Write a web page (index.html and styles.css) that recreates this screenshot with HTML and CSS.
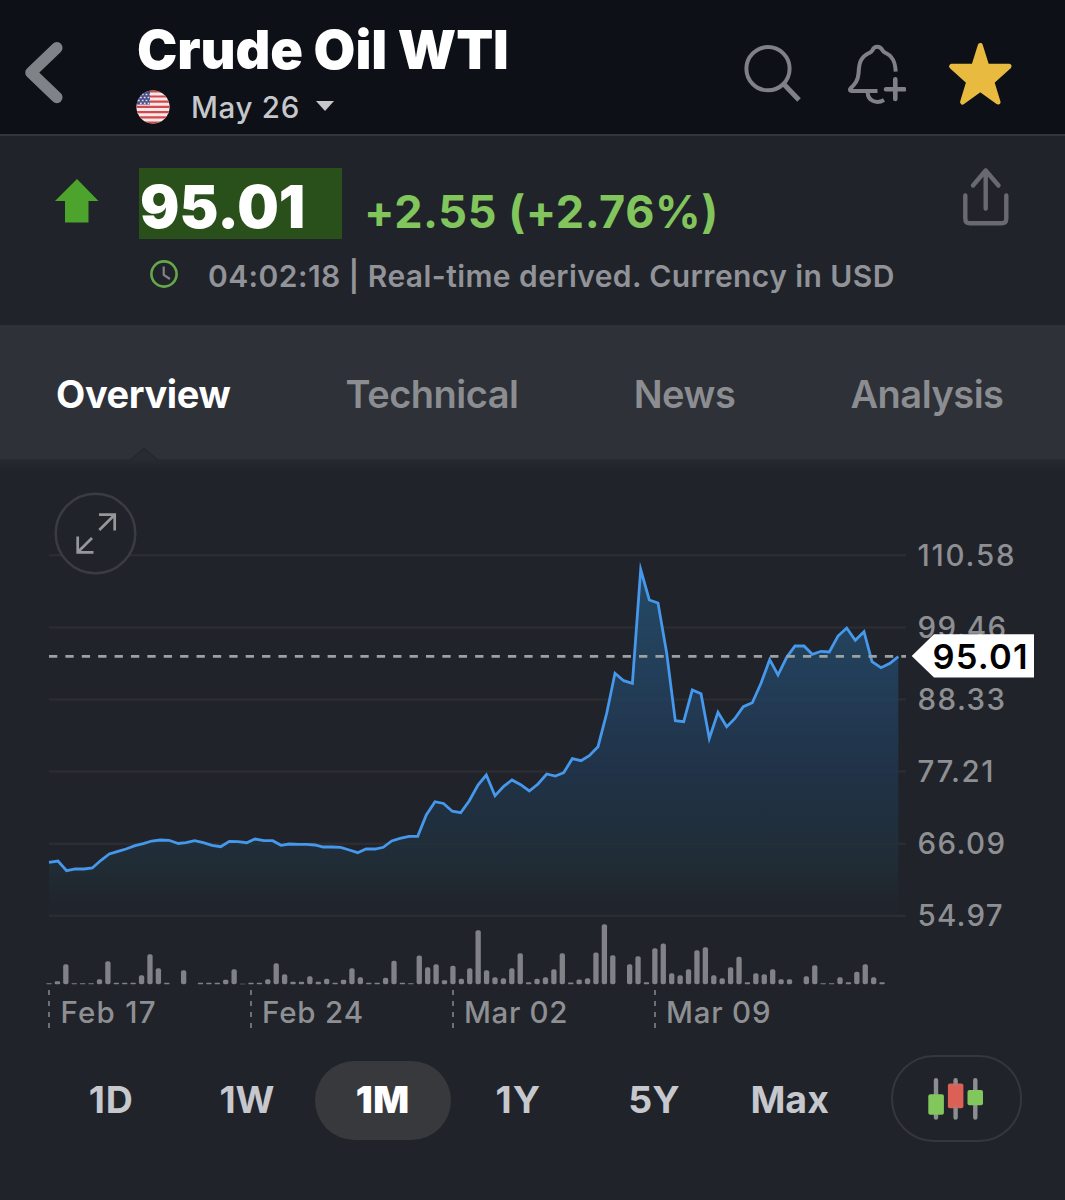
FILE: index.html
```html
<!DOCTYPE html>
<html lang="en">
<head>
<meta charset="utf-8">
<title>Crude Oil WTI</title>
<link rel="stylesheet" href="styles.css">
</head>
<body>
<header class="topbar">
  <svg class="back" width="44" height="70" viewBox="22 38 44 70"><path d="M56.8 47.8 31 72.6 56.8 97.4"/></svg>
  <div class="heading">
    <h1 class="title">Crude Oil WTI</h1>
    <div class="contract">
      <svg class="flag" width="34" height="34" viewBox="0 0 34 34">
        <clipPath id="disc"><circle cx="17" cy="17" r="16.6"/></clipPath>
        <g clip-path="url(#disc)">
          <rect width="34" height="34" fill="#f6e9e8"/>
          <path d="M0 1.3h34M0 6.5h34M0 11.7h34M0 16.9h34M0 22.1h34M0 27.3h34M0 32.5h34" stroke="#d1494c" stroke-width="2.2"/>
          <rect width="14" height="14.6" fill="#4a4d86"/>
          <path d="M2 4.5h12M4 7.5h10M2 10.5h12M4 13.3h10" stroke="#dcdcea" stroke-width="1.7" stroke-dasharray="1.8 2"/>
        </g>
      </svg>
      <span class="month">May 26</span>
      <svg class="caret" width="18" height="10" viewBox="0 0 18 10"><path d="M0 0h18L9 10z"/></svg>
    </div>
  </div>
  <div class="actions">
    <svg width="60" height="64" viewBox="742 41 60 64"><g fill="none" stroke="#7f8187" stroke-width="4"><circle cx="768" cy="68.7" r="21.6"/><path stroke-width="5" d="M783.2 83.5 799 100"/></g></svg>
    <svg width="64" height="64" viewBox="842 41 64 64"><g fill="none" stroke="#7f8187" stroke-width="4" stroke-linejoin="round"><path d="M877.5 91H851.5Q849 90.6 850.5 88.5C855 84 858 81 858.6 73C859 63 860.5 57 869.5 52.8C871.5 52 871.6 51.8 872.3 50.5Q873.8 46.8 877.3 46.8T882.6 50.5C883.3 51.8 883.4 52 885.4 52.8C892.5 56 895.3 61.500 895.7 71.700"/><path d="M867.6 91.500C867.5 101.500 877 104 884 100"/><path stroke-width="4.600" stroke-linecap="round" d="M886 89.200h18.300M895.300 79.300v19.700"/></g></svg>
    <svg width="66" height="66" viewBox="946 41 66 66"><path d="M980.3 45.500 986.800 66.300H1009L991.800 81.800 998 102 980.300 89.300 962.600 102 968.800 81.800 951.600 66.300H973.800Z" fill="#e8bb40" stroke="#e8bb40" stroke-width="5" stroke-linejoin="round"/></svg>
  </div>
</header>

<section class="quote">
  <svg class="up" width="44" height="44" viewBox="0 0 44 44"><path d="M22 0 43.500 22H33.500V43.500H10V22H0z"/></svg>
  <div class="figures">
    <div class="price-row">
      <span class="price">95.01</span>
      <span class="change">+2.55 (+2.76%)</span>
    </div>
    <div class="status">
      <svg class="clock" width="28" height="28" viewBox="0 0 28 28"><g fill="none" stroke-width="2.600"><circle cx="14" cy="14" r="12.600" stroke="#65a849"/><path d="M13.700 6.500V14.800L20 19" stroke="#85818a" stroke-width="2.200"/></g></svg>
      <span class="note">04:02:18 | Real-time derived. Currency in USD</span>
    </div>
  </div>
  <svg class="share" width="50" height="60" viewBox="961 167 50 60"><path d="M985.700 170.500V208.500M973 185.500 985.700 170.500 998.500 185.500M965.300 195.500V218.500Q965.300 223.300 970 223.300H1001.500Q1006.300 223.300 1006.300 218.500V195.500"/></svg>
</section>

<nav class="tabs">
  <a class="tab active">Overview</a>
  <a class="tab">Technical</a>
  <a class="tab">News</a>
  <a class="tab">Analysis</a>
</nav>

<main class="chart">
  <svg class="plot" width="1065" height="590" viewBox="0 446 1065 590">
    <defs>
      <linearGradient id="area" gradientUnits="userSpaceOnUse" x1="0" y1="565" x2="0" y2="916">
        <stop offset="0" stop-color="#25506f" stop-opacity=".85"/>
        <stop offset=".33" stop-color="#234361" stop-opacity=".82"/>
        <stop offset=".58" stop-color="#20354d" stop-opacity=".85"/>
        <stop offset=".85" stop-color="#20303a" stop-opacity=".75"/>
        <stop offset="1" stop-color="#21282e" stop-opacity=".2"/>
      </linearGradient>
      <linearGradient id="shade" x1="0" y1="0" x2="0" y2="1">
        <stop offset="0" stop-color="#272a31"/>
        <stop offset="1" stop-color="#20232a"/>
      </linearGradient>
    </defs>
    <rect y="459" width="1065" height="12" fill="url(#shade)"/>
    <path d="M131 460 144 448 157 460z" fill="#282b32"/>
    <path d="M131 459.500 144 448 157 459.500" fill="none" stroke="#24272d" stroke-width="1.200"/>
    <path class="grid" d="M49 555.300H906M49 627.500H906M49 699.500H906M49 771.600H906M49 843.800H906M49 915.800H906"/>
    <path id="fill" fill="url(#area)"/>
    <path id="line" class="line"/>
    <path class="last" d="M49 656.300H906"/>
    <g id="volume" class="volume"></g>
    <path class="ticks" d="M49 990V1029M251 990V1029M453 990V1029M655 990V1029"/>
    <g class="dates">
      <text x="60.500" y="1023.300" textLength="95">Feb 17</text>
      <text x="262" y="1023.300" textLength="101">Feb 24</text>
      <text x="464" y="1023.300" textLength="103.500">Mar 02</text>
      <text x="666" y="1023.300" textLength="104.500">Mar 09</text>
    </g>
    <g class="scale">
      <text x="917.500" y="565.500" textLength="97">110.58</text>
      <text x="917.500" y="638" textLength="88.500">99.46</text>
      <text x="917.500" y="710" textLength="87.500">88.33</text>
      <text x="917.500" y="782" textLength="76">77.21</text>
      <text x="917.500" y="854" textLength="87.500">66.09</text>
      <text x="917.500" y="926" textLength="85">54.97</text>
    </g>
    <path d="M911.700 656 934 634.300H1034V677.500H934Z" fill="#fff"/>
    <text class="tag" x="932.500" y="668.500" textLength="95">95.01</text>
  </svg>
  <svg class="expand" width="84" height="84" viewBox="0.5 0.5 84 84"><circle cx="42" cy="42" r="39.800"/><path d="M45.500 23.200H61.200V39M60.200 24.200 45.800 38.500M24.200 45V60.800H40M25.200 59.800 38.500 46.500"/></svg>
</main>

<footer class="ranges">
  <div class="range-list">
    <span class="range wide">1D</span>
    <span class="range">1W</span>
    <span class="range selected">1M</span>
    <span class="range wide">1Y</span>
    <span class="range">5Y</span>
    <span class="range">Max</span>
  </div>
  <div class="candles">
    <svg width="60" height="44" viewBox="926 1077 60 44"><path d="M936 1080.300V1117.500M955.600 1080.300V1117.500M975.300 1080.300V1117.500" stroke="#8d8e91" stroke-width="4.400" stroke-linecap="round"/><rect x="928.300" y="1094.300" width="15.600" height="20.400" rx="2" fill="#82c75b"/><rect x="947.900" y="1083.600" width="15.500" height="24.600" rx="2" fill="#dd6056"/><path d="M955.600 1083.600V1086M955.600 1105.500V1108.200" stroke="#b9766f" stroke-width="4"/><rect x="967.500" y="1090" width="15.500" height="15.200" rx="2" fill="#82c75b"/></svg>
  </div>
</footer>
<script src="chart.js"></script>
</body>
</html>
```
FILE: styles.css
```css
* { box-sizing: border-box; }
body {
  margin: 0;
  width: 1065px;
  height: 1200px;
  overflow: hidden;
  background: #20232a;
  color: #fff;
  font-family: Inter, "Liberation Sans", sans-serif;
  display: flex;
  flex-direction: column;
}
svg { display: block; flex: none; }
.topbar {
  height: 136px;
  background: #0d1017;
  border-bottom: 2px solid #32353a;
  display: flex;
  align-items: flex-start;
  padding-left: 22px;
}
.back { margin-top: 38px; }
.back path { fill: none; stroke: #7f8287; stroke-width: 11.5; stroke-linecap: round; stroke-linejoin: round; }
.heading { margin-left: 70px; padding-top: 20px; width: 606px; }
.title { margin: 0 0 0 1px; font-size: 54px; line-height: 60px; font-weight: 900; letter-spacing: -.1px; white-space: nowrap; }
.contract { display: flex; align-items: center; height: 34px; margin-top: 10px; }
.month { margin-left: 21px; width: 108px; font-size: 29.5px; line-height: 34px; font-weight: 550; letter-spacing: .7px; color: #c5c7cb; white-space: nowrap; }
.caret { margin-left: 17px; margin-top: -2px; fill: #c5c7cb; }
.actions { display: flex; padding-top: 41px; gap: 40px; }

.quote { height: 189px; display: flex; align-items: flex-start; padding-left: 55px; }
.up { margin-top: 43px; fill: #4ca42d; }
.figures { margin-left: 40px; padding-top: 32px; width: 822px; }
.price-row { display: flex; }
.price { width: 203px; height: 71px; padding: 7px 0 0 1px; background: #29501a; font-size: 58.5px; line-height: 64px; font-weight: 900; letter-spacing: 0; }
.change { margin-left: 22px; padding-top: 12px; font-size: 45px; line-height: 64px; font-weight: 700; color: #82c55d; letter-spacing: .55px; white-space: nowrap; }
.status { display: flex; align-items: center; margin: 15px 0 0 11px; height: 34px; }
.clock { margin-top: -4px; }
.note { margin-left: 30px; font-size: 30px; line-height: 34px; font-weight: 600; color: #929398; letter-spacing: .42px; white-space: nowrap; }
.share { margin-top: 31px; }
.share path { fill: none; stroke: #686a70; stroke-width: 4.400; stroke-linecap: round; stroke-linejoin: round; }

.tabs { height: 134px; background: #2e3138; display: flex; justify-content: space-between; padding: 46px 61.5px 0 56px; }
.tab { font-size: 38px; line-height: 46px; font-weight: 600; color: #8b8d91; letter-spacing: -.5px; }
.tab.active { color: #fff; font-weight: 700; letter-spacing: -.4px; }

.chart { position: relative; height: 577px; }
.plot { margin-top: -13px; position: relative; }
.grid { fill: none; stroke: #2b2d32; stroke-width: 2.500; }
.line { fill: none; stroke: #4598ec; stroke-width: 2.800; stroke-miterlimit: 10; }
.last { stroke: #9ea1a3; stroke-width: 2.800; stroke-dasharray: 8.300 8.090; fill: none; }
.volume { fill: #808287; }
.ticks { stroke: #77797d; stroke-width: 1.800; stroke-dasharray: 5 6; fill: none; }
.dates, .scale { fill: #8e8f92; font-size: 29.5px; font-weight: 550; }
.tag { fill: #000; font-size: 34.5px; font-weight: 600; }
.expand { position: absolute; left: 54px; top: 33px; fill: none; }
.expand circle { stroke: #3a3c41; stroke-width: 2.500; fill: #20232a; }
.expand path { stroke: #96979a; stroke-width: 2.700; }

.ranges { display: flex; padding: 19px 0 0 43.5px; }
.range-list { width: 814px; display: grid; grid-template-columns: repeat(6, 1fr); padding-top: 6px; height: 85px; }
.range { display: flex; align-items: center; justify-content: center; font-size: 37.5px; font-weight: 700; color: #c6c8cd; border-radius: 40px; padding-bottom: 2px; }
.range.wide { letter-spacing: 1px; }
.range.selected { background: #38393c; color: #fff; font-weight: 900; letter-spacing: .6px; }
.candles { margin-left: 33px; width: 131px; height: 87px; border: 2.500px solid #35373c; border-radius: 43px; display: flex; align-items: center; justify-content: center; }
```
FILE: chart.js
```js
const prices = [
  [49,862.3],[58,861],[66.6,870.7],[75.3,869],[84,869],[92.3,868],[101,860.3],[109.3,854],[118,851.3],[126,849],
  [135,845.7],[143.3,843.7],[151.7,841],[160.3,840],[169,840.3],[178.3,843.5],[186,842.7],[194.7,840.7],[203.3,842.7],[212,845.3],
  [220.7,846.7],[229.3,841.3],[238,841.7],[246.7,842.7],[255,839],[264,840.7],[272.7,840.7],[281,845.3],[289.3,844],[298,844.4],
  [306.5,844.4],[315,845],[323.3,847],[332,847],[340.7,847.3],[349.3,850],[357.7,852.7],[366,849],[375,849],[383.3,847.3],
  [391.7,841],[400,838.3],[409,836.3],[417.7,836.3],[426.3,815],[435,801.7],[443.5,803.5],[452.3,811.2],[460.7,812.7],[469.3,800.7],
  [478,785],[486.3,775],[495,795.7],[503.7,786.3],[512,780],[520.7,784.7],[529.3,791],[538,784],[546.7,774],[555.3,776],
  [563.7,772.7],[572.3,758.7],[581,760.7],[589.3,755.7],[598,746.7],[606.7,713.3],[615,673.3],[623.7,680.7],[632.4,683.3],[640.7,569.5],
  [649.3,600],[658,603],[666.7,653.3],[675.3,720.7],[683.7,721.7],[692.3,690],[701,693.7],[709.3,738.5],[718,712.3],[726.7,726.7],
  [734.7,718.7],[743.3,706.7],[752.3,702.7],[761,683.3],[769.7,659.7],[778,675],[786.7,657.3],[795,646],[804,646],[812.3,654.3],
  [821,651.3],[829.3,652],[838,636],[846.7,628],[855.3,640.3],[864,631.7],[872,661.7],[881,667.7],[890,663.3],[898.3,656.7]
];
const path = 'M' + prices.map(p => p.join(' ')).join('L');
document.getElementById('line').setAttribute('d', path);
document.getElementById('fill').setAttribute('d', path + 'V916H49Z');

// Bar heights in thirds of a pixel, one per session
const volumes = [
  3,9,60,3,3,3,15,69,4,4,4,27,90,48,4,0,42,0,4,4,4,13,45,1,4,4,15,63,30,7,7,24,7,16,4,13,48,21,4,4,
  19,70,4,3,86,51,60,12,55,16,48,162,42,21,18,48,93,6,16,21,45,93,5,14,18,95,180,87,0,60,84,6,108,122,33,27,45,102,111,27,
  18,51,82,6,33,30,45,15,15,0,24,57,3,3,21,6,37,60,21,6
];
const group = document.getElementById('volume');
volumes.forEach((v, i) => {
  if (!v) return;
  const bar = document.createElementNS('http://www.w3.org/2000/svg', 'rect');
  const h = v / 3;
  bar.setAttribute('x', (49 + i * 8.415 - 2.65).toFixed(2));
  bar.setAttribute('y', (984.2 - h).toFixed(2));
  bar.setAttribute('width', 5.3);
  bar.setAttribute('height', h.toFixed(2));
  bar.setAttribute('rx', Math.min(2, h / 3));
  group.appendChild(bar);
});
```
